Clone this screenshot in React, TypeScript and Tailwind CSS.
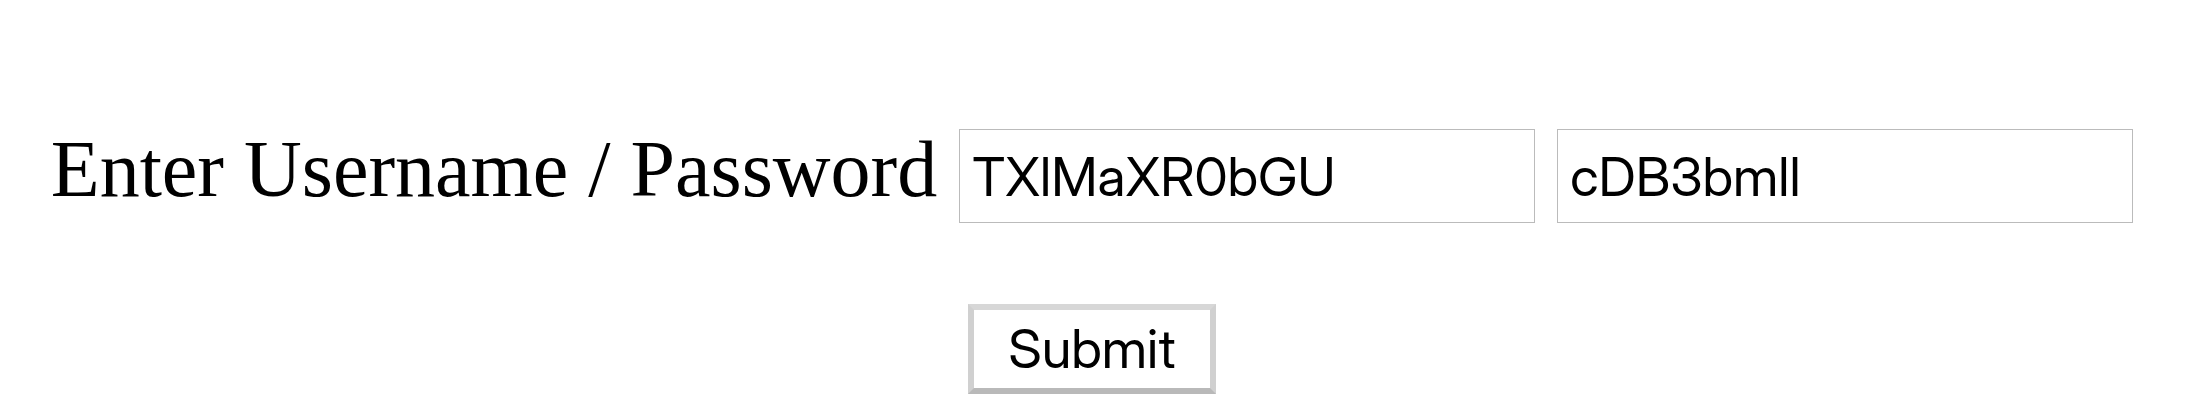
const fieldClass =
  "h-[94px] w-[576px] border border-[#bbbbbb] px-3 pt-px font-['Inter_Display',Inter,sans-serif] text-[54px]";

export default function App() {
  return (
    <form
      className="flex flex-col items-center bg-white pt-[129px] pr-[22px] text-black"
      onSubmit={(e) => e.preventDefault()}
    >
      <div className="flex items-baseline gap-[22px]">
        <label
          htmlFor="username"
          className="whitespace-nowrap font-['Liberation_Serif',serif] text-[80px] leading-[80px]"
        >
          Enter Username / Password
        </label>
        <input id="username" type="text" defaultValue="TXlMaXR0bGU" className={fieldClass} />
        <input aria-label="Password" type="text" defaultValue="cDB3bmll" className={fieldClass} />
      </div>
      <button
        type="submit"
        className="mt-[81px] h-[90px] w-[248px] border-6 border-[#d0d0d0] border-t-[#d7d7d7] border-b-[#b9b9b9] font-['Inter_Display',Inter,sans-serif] text-[54px] leading-none"
      >
        Submit
      </button>
    </form>
  );
}
